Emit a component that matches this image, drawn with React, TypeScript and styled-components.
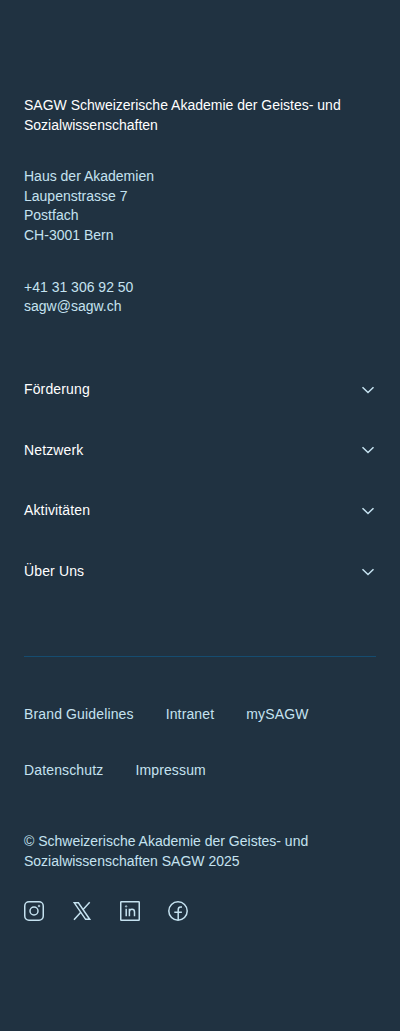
import React from 'react';
import styled, { createGlobalStyle } from 'styled-components';

const GlobalStyle = createGlobalStyle`
  *, *::before, *::after { box-sizing: border-box; }
  body { margin: 0; background: #203241; }
`;

const Footer = styled.footer`
  min-height: 1031px;
  padding: 96px 24px 0;
  background: #203241;
  color: #c5e2f0;
  font: 14px/19.6px "Liberation Sans", Arial, sans-serif;
`;

const Block = styled.p<{ $bright?: boolean }>`
  margin: 0 0 32px;
  color: ${(p) => (p.$bright ? '#ffffff' : 'inherit')};
`;

const Sections = styled.div`
  margin-top: 42.8px;
`;

const SectionButton = styled.button`
  display: flex;
  align-items: center;
  justify-content: space-between;
  width: 100%;
  height: 60.6px;
  padding: 0 1px 0 0;
  border: 0;
  background: none;
  color: #ffffff;
  font: inherit;
  letter-spacing: 0.14px;
  text-align: left;
`;

const Chevron = styled.svg`
  display: block;
  width: 14px;
  height: 8px;
  color: #c5e2f0;
`;

const Divider = styled.hr`
  height: 1px;
  margin: 54px 0 0;
  border: 0;
  background: #154c70;
`;

const Links = styled.nav`
  display: flex;
  flex-wrap: wrap;
  gap: 36.4px 32px;
  margin-top: 48px;
  letter-spacing: 0.14px;
`;

const FooterLink = styled.a`
  color: inherit;
  text-decoration: none;
`;

const Copyright = styled.p`
  margin: 51.65px 0 0;
`;

const Socials = styled.div`
  display: flex;
  gap: 28px;
  margin-top: 29.75px;
`;

const SocialLink = styled.a`
  display: block;
  width: 20px;
  height: 20px;
  color: inherit;

  svg { display: block; }
`;

const Icon = ({ children }: { children: React.ReactNode }) => (
  <svg width="20" height="20" viewBox="0 0 20 20" fill="none" stroke="currentColor" strokeWidth="1.5">
    {children}
  </svg>
);

const socials = [
  {
    name: 'Instagram',
    icon: (
      <>
        <rect x="0.75" y="0.75" width="18.5" height="18.5" rx="4.2" />
        <circle cx="10" cy="10" r="4" />
        <circle cx="15" cy="5" r="1.25" fill="currentColor" stroke="none" opacity="0.75" />
      </>
    ),
  },
  {
    name: 'X',
    icon: (
      <>
        <path d="M2.3 1.8h4.1l11.3 16.5h-4.1z" />
        <path d="M17.7 1.2 10.9 8.7M8.8 11.2 2 18.8" />
      </>
    ),
  },
  {
    name: 'LinkedIn',
    icon: (
      <>
        <rect x="0.75" y="0.75" width="18.5" height="18.5" rx="0.6" />
        <path d="M6.2 7.8v7.4M9.4 7.8v7.4M9.4 10.9c0-1.7 1-2.7 2.6-2.7s2.5 1 2.5 2.7v4.3" />
        <circle cx="6.1" cy="5.4" r="0.7" strokeWidth="0.9" />
      </>
    ),
  },
  {
    name: 'Facebook',
    icon: (
      <>
        <circle cx="10" cy="10" r="9.2" />
        <path d="M10.2 19V8.7c0-1.7.9-2.7 2.5-2.7h1.3M6.3 11.3h7.6" />
      </>
    ),
  },
];

const sections = ['Förderung', 'Netzwerk', 'Aktivitäten', 'Über Uns'];
const links = ['Brand Guidelines', 'Intranet', 'mySAGW', 'Datenschutz', 'Impressum'];

export default function App() {
  return (
    <>
      <GlobalStyle />
      <Footer>
        <Block $bright>SAGW Schweizerische Akademie der Geistes- und Sozialwissenschaften</Block>
        <Block>
          Haus der Akademien<br />
          Laupenstrasse 7<br />
          Postfach<br />
          CH-3001 Bern
        </Block>
        <Block>
          +41 31 306 92 50<br />
          sagw@sagw.ch
        </Block>
        <Sections>
          {sections.map((label) => (
            <SectionButton key={label} type="button">
              {label}
              <Chevron viewBox="0 0 14 8" fill="none" stroke="currentColor" strokeWidth="1.5">
                <path d="M1.5 1.2 7 6.5l5.5-5.3" />
              </Chevron>
            </SectionButton>
          ))}
        </Sections>
        <Divider />
        <Links>
          {links.map((label) => (
            <FooterLink key={label} href="#">{label}</FooterLink>
          ))}
        </Links>
        <Copyright>© Schweizerische Akademie der Geistes- und Sozialwissenschaften SAGW 2025</Copyright>
        <Socials>
          {socials.map(({ name, icon }) => (
            <SocialLink key={name} href="#" aria-label={name}>
              <Icon>{icon}</Icon>
            </SocialLink>
          ))}
        </Socials>
      </Footer>
    </>
  );
}
